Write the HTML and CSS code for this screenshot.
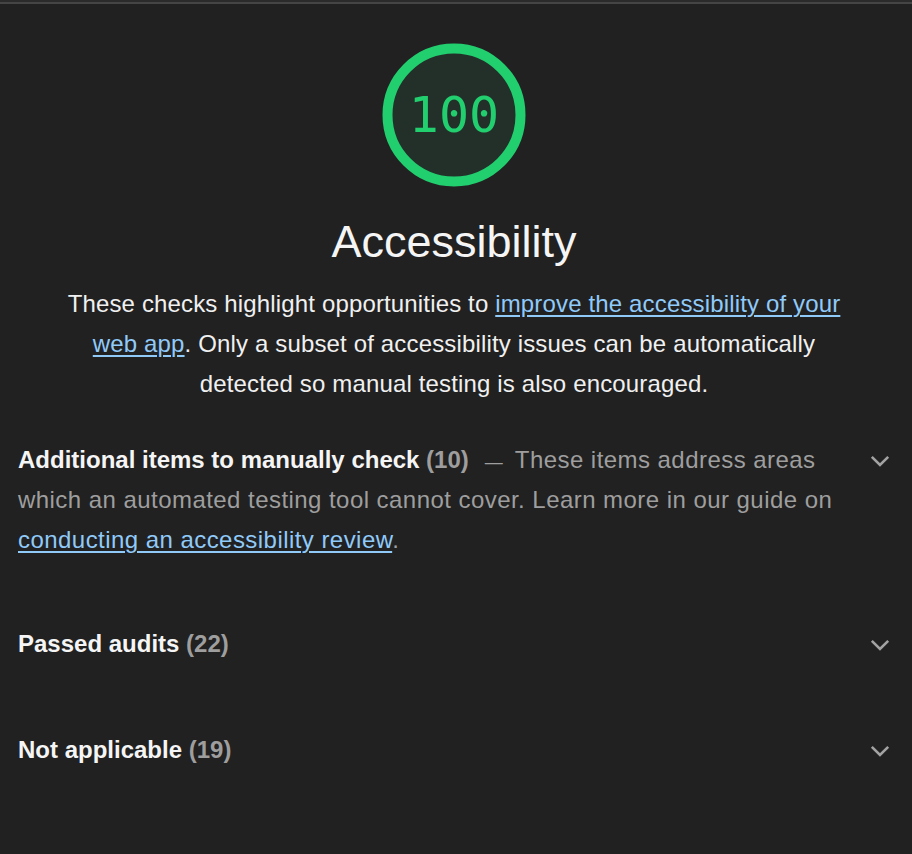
FILE: index.html
```html
<!DOCTYPE html>
<html lang="en">
<head>
<meta charset="utf-8">
<title>Accessibility</title>
<link rel="stylesheet" href="styles.css">
</head>
<body>
<div class="topbar"></div>
<section class="category">
  <header class="cat-header">
    <div class="gauge">
      <svg class="gauge-ring" viewBox="0 0 144 144" width="144" height="144" aria-hidden="true">
        <circle cx="72" cy="72" r="66.5" fill="#23302a" stroke="#22cf6f" stroke-width="10"/>
      </svg>
      <span class="gauge-pct">100</span>
    </div>
    <h2 class="cat-title">Accessibility</h2>
    <p class="cat-desc">These checks highlight opportunities to <a href="#">improve the accessibility of your web app</a>. Only a subset of accessibility issues can be automatically detected so manual testing is also encouraged.</p>
  </header>

  <div class="groups">
    <div class="group">
      <p class="group-text"><b class="group-title">Additional items to manually check</b> <b class="group-count">(10)</b><span class="group-dash">—</span><span class="group-desc">These items address areas which an automated testing tool cannot cover. Learn more in our guide on <a href="#">conducting an accessibility review</a>.</span></p>
      <span class="chevron"><svg viewBox="0 0 20 12" width="20" height="12" aria-hidden="true"><polyline points="1.8,1.8 10,10 18.2,1.8" fill="none" stroke="#a3a3a3" stroke-width="2.6"/></svg></span>
    </div>
    <div class="group">
      <p class="group-text"><b class="group-title">Passed audits</b> <b class="group-count">(22)</b></p>
      <span class="chevron"><svg viewBox="0 0 20 12" width="20" height="12" aria-hidden="true"><polyline points="1.8,1.8 10,10 18.2,1.8" fill="none" stroke="#a3a3a3" stroke-width="2.6"/></svg></span>
    </div>
    <div class="group">
      <p class="group-text"><b class="group-title">Not applicable</b> <b class="group-count">(19)</b></p>
      <span class="chevron"><svg viewBox="0 0 20 12" width="20" height="12" aria-hidden="true"><polyline points="1.8,1.8 10,10 18.2,1.8" fill="none" stroke="#a3a3a3" stroke-width="2.6"/></svg></span>
    </div>
  </div>
</section>
</body>
</html>
```

FILE: styles.css
```css
html, body {
  margin: 0;
  padding: 0;
  background: #212121;
}

body {
  font-family: "Liberation Sans", Arial, Helvetica, sans-serif;
  color: #f5f5f5;
  font-size: 24px;
  line-height: 40px;
}

.topbar {
  height: 0;
  border-top: 2px solid #2b2b2b;
  border-bottom: 2px solid #454545;
}

.category {
  padding: 0 22px 0 18px;
}

.cat-header {
  display: flex;
  flex-direction: column;
  align-items: center;
  padding-top: 39px;
}

.gauge {
  display: grid;
  width: 144px;
  height: 144px;
  place-items: center;
}

.gauge-ring,
.gauge-pct {
  grid-area: 1 / 1;
}

.gauge-ring {
  display: block;
}

.gauge-pct {
  font-family: "DejaVu Sans Mono", "Liberation Mono", monospace;
  font-size: 50px;
  line-height: 50px;
  color: #22cf6f;
}

.cat-title {
  margin: 29px 0 0;
  font-size: 45px;
  line-height: 52px;
  font-weight: normal;
  color: #f5f5f5;
}

.cat-desc {
  margin: 16px 0 0;
  width: 796px;
  text-align: center;
  color: #f0f0f0;
  letter-spacing: 0.15px;
}

a {
  color: #90caf9;
  text-decoration: underline;
  text-underline-offset: 3px;
  text-decoration-thickness: 1.5px;
}

.groups {
  display: flex;
  flex-direction: column;
  gap: 64px;
  margin-top: 36px;
}

.group {
  display: flex;
  align-items: flex-start;
}

.group-text {
  flex: 1;
  min-width: 0;
  margin: 0 24px 0 0;
  color: #9e9e9e;
}

.group-title {
  font-weight: bold;
  color: #f5f5f5;
}

.group-count {
  font-weight: bold;
  color: #9e9e9e;
}

.group-dash {
  font-size: 18px;
  line-height: 1;
  margin: 0 12px 0 16px;
  color: #9e9e9e;
}

.group-desc {
  letter-spacing: 0.45px;
}

.chevron {
  display: flex;
  align-items: center;
  height: 42px;
}

.chevron svg {
  display: block;
}
```
